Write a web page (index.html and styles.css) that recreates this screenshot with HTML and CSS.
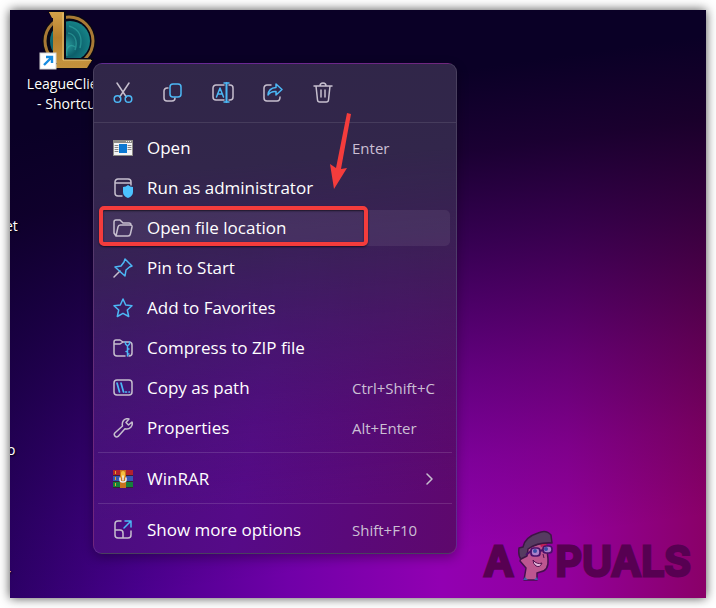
FILE: index.html
```html
<!DOCTYPE html>
<html lang="en">
  <head>
    <meta charset="utf-8" />
    <meta name="viewport" content="width=device-width, initial-scale=1.0" />
    <title>Open file location</title>
    <link rel="stylesheet" href="styles.css">
  </head>
  <body>
    <main class="desktop">
      <div class="shortcut">
        <svg class="shortcut-icon" width="60" height="60" viewBox="0 0 60 60">
          <defs>
            <linearGradient id="gold" x1="0" y1="0" x2="0" y2="1">
              <stop offset="0" stop-color="#d3a04a" />
              <stop offset="0.5" stop-color="#b57e2b" />
              <stop offset="1" stop-color="#c3933e" />
            </linearGradient>
            <radialGradient id="teal" cx="0.4" cy="0.6" r="0.6">
              <stop offset="0" stop-color="#2a9c9c" />
              <stop offset="0.5" stop-color="#0d5f6b" />
              <stop offset="1" stop-color="#158085" />
            </radialGradient>
          </defs>
          <circle cx="30" cy="31" r="27" fill="#080716" />
          <circle cx="30" cy="31" r="24" fill="none" stroke="#a97a35" stroke-width="3" />
          <circle cx="31" cy="31" r="20" fill="url(#teal)" />
          <path d="M30 16c10 3 14 11 11 22M29 23c7 1 10 8 7 17M28 46c-2-8 3-13 8-9" fill="none" stroke="#37b5ae" stroke-width="1.5" opacity=".5" />
          <path d="M8 1h19v47h28l-6 11H13l3-5V9z" fill="#080716" />
          <path d="M10 2h15v48h28l-5 8H15l3-5V8h-5z" fill="url(#gold)" />
          <path d="M10 2h15v48h28l-2 3H14V8z" fill="url(#gold)" />
          <path d="M24 3v47h28" fill="none" stroke="#ecc97b" stroke-width="1" />
          <rect x="1" y="43" width="16" height="16" fill="#fff" stroke="#d8d8d8" />
          <path d="M5 55l8-8M7 47h6v6" fill="none" stroke="#168be0" stroke-width="2.4" />
        </svg>
        <span class="shortcut-name">LeagueClient - Shortcut</span>
      </div>
      <span class="clipped clipped-one">et</span>
      <span class="clipped clipped-two">o</span>
      <span class="clipped clipped-three">r</span>

      <div class="menu">
        <div class="toolbar">
          <button type="button" aria-label="Cut">
            <svg class="icon" width="20" height="22" viewBox="0 0 20 22">
              <path d="M4 1l9.300 14M16 1L6.700 15" />
              <g class="blue"><circle cx="4.500" cy="17" r="3.300" /><circle cx="15.500" cy="17" r="3.300" /></g>
            </svg>
          </button>
          <button type="button" aria-label="Copy">
            <svg class="icon" width="20" height="22" viewBox="0 0 20 22">
              <path d="M5 6H4a3 3 0 0 0-3 3v7a3 3 0 0 0 3 3h5q3 0 3-3" />
              <rect class="blue" x="7" y="2" width="11" height="13" rx="3" />
            </svg>
          </button>
          <button type="button" aria-label="Rename">
            <svg class="icon" width="22" height="22" viewBox="0 0 22 22">
              <path d="M12 3H4a3 3 0 0 0-3 3v9a3 3 0 0 0 3 3h8M17 3h1a3 3 0 0 1 3 3v9a3 3 0 0 1-3 3h-1" />
              <path class="blue" d="M4.500 15L8 6l3.500 9M5.500 12h5M12 1h5M12 20h5" />
              <path class="blue" stroke-width="2" d="M14.500 1v19" />
            </svg>
          </button>
          <button type="button" aria-label="Share">
            <svg class="icon" width="20" height="22" viewBox="0 0 20 22">
              <path d="M8 3H4a3 3 0 0 0-3 3v10a3 3 0 0 0 3 3h10q3 0 3-4" />
              <path class="blue" d="M13 2l6 5.500L13 13v-3.500Q8 9 5 13 5.500 6 13 5.500z" />
            </svg>
          </button>
          <button type="button" aria-label="Delete">
            <svg class="icon" width="20" height="22" viewBox="0 0 20 22">
              <path d="M1 4h18M7 4q0-3 3-3t3 3M3 4l1.500 14q.2 2 2.200 2h6.600q2 0 2.200-2L17 4M8 8v7M12 8v7" />
            </svg>
          </button>
        </div>

        <ul class="items">
          <li>
            <button type="button" class="item">
              <svg class="icon" width="20" height="20" viewBox="0 0 20 20">
                <g stroke="none">
                  <rect y="2" width="20" height="16" fill="#8d8b86" />
                  <rect x="1" y="5" width="18" height="12" fill="#f4f4f4" />
                  <rect x="6" y="6" width="8" height="9" fill="#0b78d2" />
                </g>
                <path stroke="#888" stroke-width="1" d="M2 7.500h3M2 9.500h3M2 11.500h3M2 13.500h3M15 7.500h3M15 9.500h3M15 11.500h3" />
                <path stroke="#eee" stroke-width="1" stroke-linecap="butt" d="M13 3.500h1M15 3.500h1M17 3.500h1" />
              </svg>
              <span class="label">Open</span>
              <kbd class="keys">Enter</kbd>
            </button>
          </li>
          <li>
            <button type="button" class="item">
              <svg class="icon" width="20" height="20" viewBox="0 0 20 20">
                <path d="M9 18H5a3 3 0 0 1-3-3V4a3 3 0 0 1 3-3h10a3 3 0 0 1 3 3v3M2 5h16" />
                <path fill="#4cc2ff" stroke="none" d="M15 7q2 2 5 2v5q0 4-5 6-5-2-5-6V9q3 0 5-2z" />
              </svg>
              <span class="label">Run as administrator</span>
            </button>
          </li>
          <li class="marked">
            <button type="button" class="item active">
              <svg class="icon" width="20" height="20" viewBox="0 0 20 20">
                <path d="M3 18L1 15V4a2 2 0 0 1 2-2h4l3 3h6a2 2 0 0 1 2 2M3 18l2-9q.4-2 2.400-2H17q2.400 0 2 2l-1.600 7q-.4 2-2.400 2z" />
              </svg>
              <span class="label">Open file location</span>
            </button>
          </li>
          <li>
            <button type="button" class="item">
              <svg class="icon" width="20" height="20" viewBox="0 0 20 20">
                <path d="M1 19l6-6" />
                <path class="blue" d="M12 1l7 7-2.500 1-3.500 3-1 6L2 9l6-1 3-4z" />
              </svg>
              <span class="label">Pin to Start</span>
            </button>
          </li>
          <li>
            <button type="button" class="item">
              <svg class="icon" width="20" height="20" viewBox="0 0 20 20">
                <path class="blue" d="M10 1l2.700 6 6.300.7-4.700 4.300 1.400 6.500L10 15.300l-5.700 3.200L5.700 12 1 7.700 7.300 7z" />
              </svg>
              <span class="label">Add to Favorites</span>
            </button>
          </li>
          <li>
            <button type="button" class="item">
              <svg class="icon" width="20" height="20" viewBox="0 0 20 20">
                <path d="M12 18H4a3 3 0 0 1-3-3V4a2 2 0 0 1 2-2h4l3 2h6a3 3 0 0 1 3 3v8a3 3 0 0 1-3 3M1 6h6l3-2" />
                <path class="blue" d="M12.500 4v2l2 2 2-2V4M14.500 8v10M14.500 11h1.500M13 13.500h1.500M14.500 16h1.500" />
              </svg>
              <span class="label">Compress to ZIP file</span>
            </button>
          </li>
          <li>
            <button type="button" class="item">
              <svg class="icon" width="20" height="20" viewBox="0 0 20 20">
                <rect x="1" y="2" width="18" height="15" rx="3" />
                <path class="blue" stroke-width="1.700" d="M4 5l2.500 9M8 5l2.500 9M12.500 14h1M16 14h.5" />
              </svg>
              <span class="label">Copy as path</span>
              <kbd class="keys">Ctrl+Shift+C</kbd>
            </button>
          </li>
          <li>
            <button type="button" class="item">
              <svg class="icon" width="20" height="20" viewBox="0 0 20 20">
                <path d="M16 1q-3.500-1-5.500 1.500Q8.700 5 9.500 8L1.800 15a2.400 2.400 0 0 0 3.300 3.400L12 10.700q3.500.9 5.800-1.500Q20 6.700 19 4l-3.500 3L13 4.500z" />
              </svg>
              <span class="label">Properties</span>
              <kbd class="keys">Alt+Enter</kbd>
            </button>
          </li>
        </ul>
        <hr class="line">
        <ul class="items">
          <li>
            <button type="button" class="item">
              <svg class="icon" width="20" height="20" viewBox="0 0 20 20">
                <g stroke="none">
                  <rect y="1" width="20" height="6" fill="#b3212d" />
                  <rect y="7" width="20" height="6" fill="#3555b5" />
                  <rect y="13" width="20" height="6" fill="#15803c" />
                  <path fill="#3a2033" d="M0 6h20v1H0zM0 12h20v1H0zM0 18h20v1H0z" />
                  <path fill="#e5a92b" d="M2 2h1v3H2zM2 8h1v3H2zM2 14h1v3H2z" />
                  <rect x="7" y="1" width="6" height="18" fill="#c8731d" />
                  <rect x="8" y="2" width="4" height="7" rx="2" fill="#f6c03f" />
                </g>
                <path stroke="#eee" d="M7 9v2q0 2 3 2t3-2V9M10 7v4" />
              </svg>
              <span class="label">WinRAR</span>
              <svg class="icon chevron" width="8" height="14" viewBox="0 0 8 14">
                <path d="M1 2l5 5-5 5" />
              </svg>
            </button>
          </li>
        </ul>
        <hr class="line">
        <ul class="items">
          <li>
            <button type="button" class="item">
              <svg class="icon" width="20" height="20" viewBox="0 0 20 20">
                <path d="M8 1H5a3 3 0 0 0-3 3v11a3 3 0 0 0 3 3h10a3 3 0 0 0 3-3v-4M2 10h5q3 0 3 3v5" />
                <path class="blue" d="M11 8l7-7M12 1h6v6" />
              </svg>
              <span class="label">Show more options</span>
              <kbd class="keys">Shift+F10</kbd>
            </button>
          </li>
        </ul>
      </div>

      <svg class="arrow" width="20" height="78" viewBox="0 0 20 78">
        <path d="M17 1l4 1-10 55 6-1L4 77 0 52l6 4z" fill="#f43c3c" />
      </svg>

      <div class="watermark">
        <span>A</span>
        <svg width="36" height="52" viewBox="0 0 36 52">
          <path d="M7 20L29 12l2 18q1 12-8 13l-3 1v7H7l2-12-6-7z" fill="#bd5690" stroke="#45104f" stroke-width="1.500" />
          <path d="M22 12l7-1 1 6-6 1z" fill="#c01e56" />
          <path d="M2 19l4-1Q8 8 21 4q8-4 13 2l1 8q-14-1-24 6l-1 7-6 3q-3-3-2-11z" fill="#563b61" stroke="#3c1643" stroke-width="1.500" />
          <rect x="14" y="19" width="9" height="8" rx="3" fill="#aa80c9" stroke="#49106a" stroke-width="1.700" />
          <rect x="26" y="17" width="9" height="7" rx="3" fill="#aa80c9" stroke="#49106a" stroke-width="1.700" />
          <path d="M9 26l5-4M23 22l3-1" stroke="#49106a" stroke-width="2" />
          <circle cx="18" cy="22" r="2" fill="#394fa6" />
          <circle cx="29" cy="20" r="2" fill="#394fa6" />
          <path d="M26 25l1 4" stroke="#53104e" />
          <path d="M16 31q4 5 9 3-2 5-6 3-3-2-3-6z" fill="#e4b6dc" stroke="#53104e" />
          <path d="M6 51l2-3 3 3zM17 51l3-3 1 3z" fill="#3d61a8" />
        </svg>
        <span>PUALS</span>
      </div>
    </main>
  </body>
</html>
```
FILE: styles.css
```css
*,
*::after {
  box-sizing: border-box;
}

body {
  margin: 0;
  padding: 10px;
  background: #fff;
  font-family: "Open Sans", "Noto Sans", sans-serif;
}

.desktop {
  position: relative;
  height: calc(100vh - 20px);
  min-height: 560px;
  overflow: hidden;
  box-shadow: 0 0 10px rgba(0, 0, 0, 0.7);
  background:
    linear-gradient(172deg, #0a0026 0%, #0a0026 18%, rgba(10, 0, 34, 0.88) 30%, rgba(10, 0, 38, 0.68) 43%, rgba(10, 0, 38, 0.35) 62%, rgba(10, 0, 38, 0.15) 75%, transparent 88%),
    linear-gradient(to right, #2d0068 0%, #48008c 18%, #7000a8 40%, #9200b2 62%, #93009c 80%, #8a0068 100%);
}

.shortcut {
  display: flex;
  flex-direction: column;
  align-items: center;
  width: 90px;
  margin-left: 14px;
  color: #fff;
  font-size: 14px;
  line-height: 20px;
  text-align: center;
  text-shadow: 1px 1px 2px #000;
}

.shortcut-icon {
  margin-bottom: 4px;
}

.clipped {
  position: absolute;
  color: #fff;
  font-size: 14px;
  line-height: 20px;
  text-shadow: 1px 1px 2px #000;
}

.clipped-one {
  left: -5px;
  top: 206px;
}

.clipped-two {
  left: -3px;
  top: 430px;
}

.clipped-three {
  left: -5px;
  top: 554px;
}

/* context menu */
.menu {
  position: absolute;
  left: 83px;
  top: 53px;
  width: 364px;
  padding-bottom: 5px;
  border: 1px solid rgba(255, 255, 255, 0.12);
  border-radius: 9px;
  background:
    linear-gradient(175deg, #302648 0%, #32264b 22%, rgba(50, 38, 76, 0.8) 38%, rgba(50, 36, 80, 0.45) 55%, rgba(50, 30, 80, 0.15) 72%, transparent 88%),
    linear-gradient(100deg, #43107a 0%, #560a88 50%, #5e086c 100%);
  box-shadow: 0 4px 12px rgba(0, 0, 0, 0.3);
}

.menu button {
  border: 0;
  background: none;
  color: #fff;
  font-family: inherit;
}

.icon {
  display: block;
  fill: none;
  stroke: #c6bfce;
  stroke-width: 1.5;
  stroke-linecap: round;
  stroke-linejoin: round;
}

.blue {
  stroke: #4cb8f5;
}

.toolbar {
  display: flex;
  height: 59px;
  padding-left: 4px;
  border-bottom: 1px solid rgba(255, 255, 255, 0.1);
}

.toolbar button {
  display: flex;
  align-items: center;
  justify-content: center;
  width: 50px;
  padding: 0;
}

.items {
  margin: 0;
  padding: 0 6px;
  list-style: none;
}

.toolbar + .items {
  padding-top: 7px;
}

.items li + li {
  margin-top: 4px;
}

.item {
  display: flex;
  align-items: center;
  gap: 14px;
  width: 100%;
  height: 36px;
  padding: 0 0 0 13px;
  border-radius: 5px;
  font-size: 17px;
  line-height: 24px;
  text-align: left;
}

.menu .active {
  background: rgba(255, 255, 255, 0.07);
}

.label {
  flex: 1;
}

.keys {
  width: 98px;
  color: #cbbfd4;
  font-family: inherit;
  font-size: 15px;
}

.chevron {
  margin-right: 16px;
}

.line {
  height: 1px;
  margin: 6px 4px 8px;
  border: 0;
  background: rgba(255, 255, 255, 0.13);
}

/* red box around the entry to click */
.marked {
  position: relative;
}

.marked::after {
  content: "";
  position: absolute;
  top: -4px;
  left: -1px;
  width: 269px;
  height: 40px;
  border: 4px solid #f43c3c;
  border-radius: 5px;
  box-shadow: 0 1px 2px rgba(0, 0, 0, 0.6), inset 0 1px 2px rgba(0, 0, 0, 0.6);
}

.arrow {
  position: absolute;
  left: 320px;
  top: 102px;
  overflow: visible;
}

.watermark {
  position: absolute;
  right: 15px;
  bottom: 17px;
  display: flex;
  gap: 3px;
  align-items: flex-end;
  color: #570052;
  font-family: Inter, sans-serif;
  font-size: 41px;
  font-weight: 600;
  line-height: 40px;
  -webkit-text-stroke: 3px #570052;
  stroke-linejoin: round;
}

.watermark svg {
  -webkit-text-stroke: 0;
}
```
